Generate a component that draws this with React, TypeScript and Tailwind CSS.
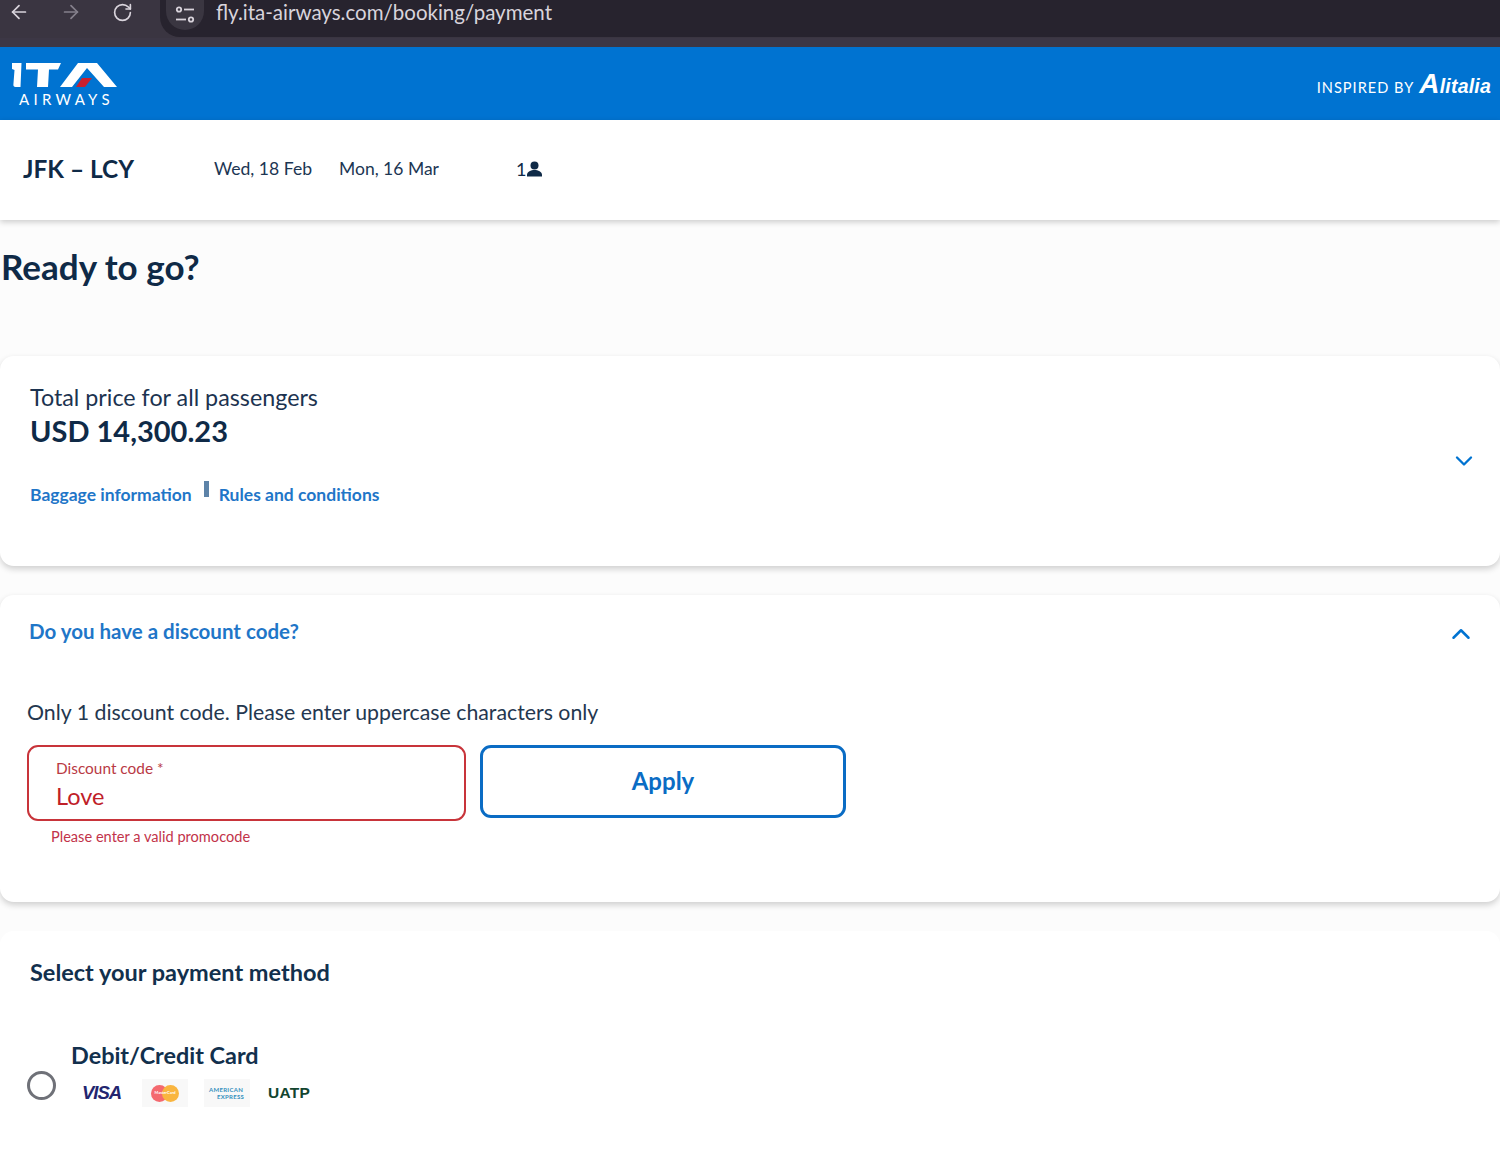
import { ArrowLeft, ArrowRight, RotateCw, ChevronDown, ChevronUp } from "lucide-react";

const BrowserBar = () => {
  return (
    <div className="h-[47px] bg-[#3c3745] overflow-hidden">
      <div className="flex items-start h-[38px] bg-[#3a3541]">
        <div className="flex items-center gap-[30px] pl-[8px] h-[24px] w-[160px] text-[#d9d4dc]">
          <ArrowLeft className="w-[22px] h-[22px]" strokeWidth={1.9} />
          <ArrowRight className="w-[22px] h-[22px] text-[#85808c]" strokeWidth={1.9} />
          <RotateCw className="w-[21px] h-[21px]" strokeWidth={1.9} />
        </div>
        <div className="flex-1 h-[37px] bg-[#27232e] rounded-bl-[20px] flex items-start pl-[6px]">
          <div className="w-[38px] h-[30px] rounded-b-full bg-[#3a3641] flex items-center justify-center">
            <svg width="22" height="20" viewBox="0 0 22 20" fill="none" stroke="#d9d4dc" strokeWidth="1.8">
              <circle cx="5" cy="4.500" r="2.200" />
              <path d="M10 4.500h10" />
              <path d="M2 14.500h10" />
              <circle cx="17" cy="14.500" r="2.200" />
            </svg>
          </div>
          <span className="ml-[12px] mt-[-1.500px] text-[20.500px] leading-[26px] text-[#d8d4dc]">fly.ita-airways.com/booking/payment</span>
        </div>
      </div>
    </div>
  );
};

const Header = () => {
  return (
    <div className="h-[73px] bg-[#0073d1] flex items-start justify-between text-white">
      <div className="pl-[12px] pt-[15px]">
        <svg width="106" height="26" viewBox="0 0 106 26" className="block">
          <g fill="white">
            <path d="M0 1h9.500l-1 24H3.500c-1.500 0-2.300-1-2.100-2.500L2.500 8 0 7z" />
            <path d="M14 1h35l-3 6.500H37L36 25H25l1-17.500H14z" />
            <path d="M66 1h19l20 24H92L75 6 60 25H48z" />
          </g>
          <path d="M70 16h10l-7 9H64z" fill="#c8202f" />
        </svg>
        <span className="block mt-[2px] pl-[7px] text-[15px] leading-[19px] tracking-[4.300px]">AIRWAYS</span>
      </div>
      <div className="flex items-center gap-[5px] pr-[9px] pt-[25px]">
        <span className="text-[14.600px] leading-[18px] tracking-[1px] mt-[5px]">INSPIRED BY</span>
        <span className="text-[19.500px] leading-[24px] font-bold italic tracking-[0.2px] font-['Liberation_Sans',sans-serif]">
          <span className="text-[28px] leading-[24px] font-black">A</span>litalia
        </span>
      </div>
    </div>
  );
};

const TripBar = () => {
  return (
    <div className="h-[100px] bg-white shadow-[0_2px_6px_rgba(0,0,0,0.2)] flex items-center pl-[23px] pb-[2px] relative">
      <span className="w-[191px] text-[24.400px] font-bold text-[#0f2a47]">JFK – LCY</span>
      <span className="w-[125px] text-[17.600px] text-[#1c3653]">Wed, 18 Feb</span>
      <span className="w-[177px] text-[17.500px] text-[#1c3653]">Mon, 16 Mar</span>
      <span className="text-[18px] text-[#0f2a47]">1</span>
      <svg width="17" height="16" viewBox="0 0 17 16" fill="#0f2a47">
        <circle cx="8.500" cy="4.500" r="4" />
        <path d="M1 14c0-3.500 4-5 7.500-5s7.500 1.500 7.500 5v1.500H1z" />
      </svg>
    </div>
  );
};

const Card = ({ className, children }: { className: string; children: React.ReactNode }) => {
  return (
    <div className={`bg-white rounded-[14px] shadow-[0_3px_6px_rgba(0,0,0,0.18)] ${className}`}>{children}</div>
  );
};

const PriceCard = () => {
  return (
    <Card className="h-[210px] relative pl-[30px] pt-[25px]">
      <p className="text-[23.300px] leading-[32px] text-[#1c3350]">Total price for all passengers</p>
      <p className="text-[29px] leading-[38px] font-bold text-[#0f2a47] mt-[-1px]">USD 14,300.23</p>
      <div className="flex items-start mt-[32px] text-[17.500px] leading-[26px] font-bold text-[#1f76c8]">
        <span>Baggage information</span>
        <span className="w-[5px] h-[16px] bg-[#5d83a8] ml-[12px] mr-[10px] mt-[-1px]" />
        <span>Rules and conditions</span>
      </div>
      <ChevronDown className="absolute right-[22px] top-[91px] w-[28px] h-[28px] text-[#0073d1]" strokeWidth={2} />
    </Card>
  );
};

const DiscountCard = () => {
  return (
    <Card className="h-[307px] relative pl-[27px] pt-[21px]">
      <p className="text-[20.500px] leading-[30px] font-bold text-[#1f76c8] pl-[2px]">Do you have a discount code?</p>
      <ChevronUp className="absolute right-[24px] top-[24px] w-[30px] h-[30px] text-[#0073d1]" strokeWidth={2} />
      <p className="text-[21.300px] leading-[30px] text-[#24374f] mt-[51px]">Only 1 discount code. Please enter uppercase characters only</p>
      <div className="flex items-start gap-[14px] mt-[18px]">
        <div>
          <div className="w-[439px] h-[76px] border-2 border-[#c8343a] rounded-[11px] pl-[27px] pt-[11px]">
            <p className="text-[15.400px] leading-[20px] text-[#b93a45]">Discount code *</p>
            <p className="text-[23.500px] leading-[30px] text-[#c02028] mt-[3px]">Love</p>
          </div>
          <p className="pl-[24px] mt-[6px] text-[14.600px] leading-[20px] text-[#c2334a]">Please enter a valid promocode</p>
        </div>
        <button className="w-[366px] h-[73px] pb-[2px] border-[3px] border-[#0a6cc4] rounded-[11px] text-[24px] font-bold text-[#0a6cc4]">Apply</button>
      </div>
    </Card>
  );
};

const CardBadges = () => {
  return (
    <div className="flex items-center mt-[8px] h-[28px]">
      <span className="w-[71px] pl-[11px] text-[18.500px] font-black italic text-[#23256f] font-['Liberation_Sans',sans-serif] tracking-[-1px]">VISA</span>
      <div className="relative w-[46px] h-[28px] bg-[#f8f8f8] flex items-center justify-center">
        <span className="w-[17px] h-[17px] rounded-full bg-[#f4696f]" />
        <span className="w-[17px] h-[17px] rounded-full bg-[#f9b53f] ml-[-6px]" />
        <span className="absolute inset-0 flex items-center justify-center text-[4px] font-bold text-white">MasterCard</span>
      </div>
      <div className="w-[46px] h-[28px] ml-[16px] bg-[#f8f8f8] flex flex-col justify-center text-[6px] leading-[7px] font-bold tracking-[0.3px] text-[#3590bd]">
        <span className="pl-[5px]">AMERICAN</span>
        <span className="pl-[13px]">EXPRESS</span>
      </div>
      <span className="ml-[18px] text-[15.500px] font-black text-[#13452f] font-['Liberation_Sans',sans-serif] tracking-[0.3px]">UATP</span>
    </div>
  );
};

const PaymentCard = () => {
  return (
    <div className="bg-white rounded-t-[14px] h-[227px] pl-[30px] pt-[25px]">
      <p className="text-[23.500px] leading-[32px] font-bold text-[#12304d]">Select your payment method</p>
      <div className="flex items-start mt-[51px] ml-[-3px]">
        <span className="w-[29px] h-[29px] mt-[32px] rounded-full border-[3px] border-[#6f7178]" />
        <div className="ml-[15px]">
          <p className="text-[23.400px] leading-[32px] font-bold text-[#12304d]">Debit/Credit Card</p>
          <div className="mt-[1px]">
            <CardBadges />
          </div>
        </div>
      </div>
    </div>
  );
};

export default function App() {
  return (
    <div className="h-[1158px] overflow-hidden bg-[#fcfcfc] font-['Lato',sans-serif]">
      <BrowserBar />
      <Header />
      <TripBar />
      <h1 className="text-[35px] leading-[46px] font-bold text-[#0f2a47] pl-[1px] pt-[23px] h-[136px]">Ready to go?</h1>
      <div className="flex flex-col gap-[29px]">
        <PriceCard />
        <DiscountCard />
        <PaymentCard />
      </div>
    </div>
  );
}
